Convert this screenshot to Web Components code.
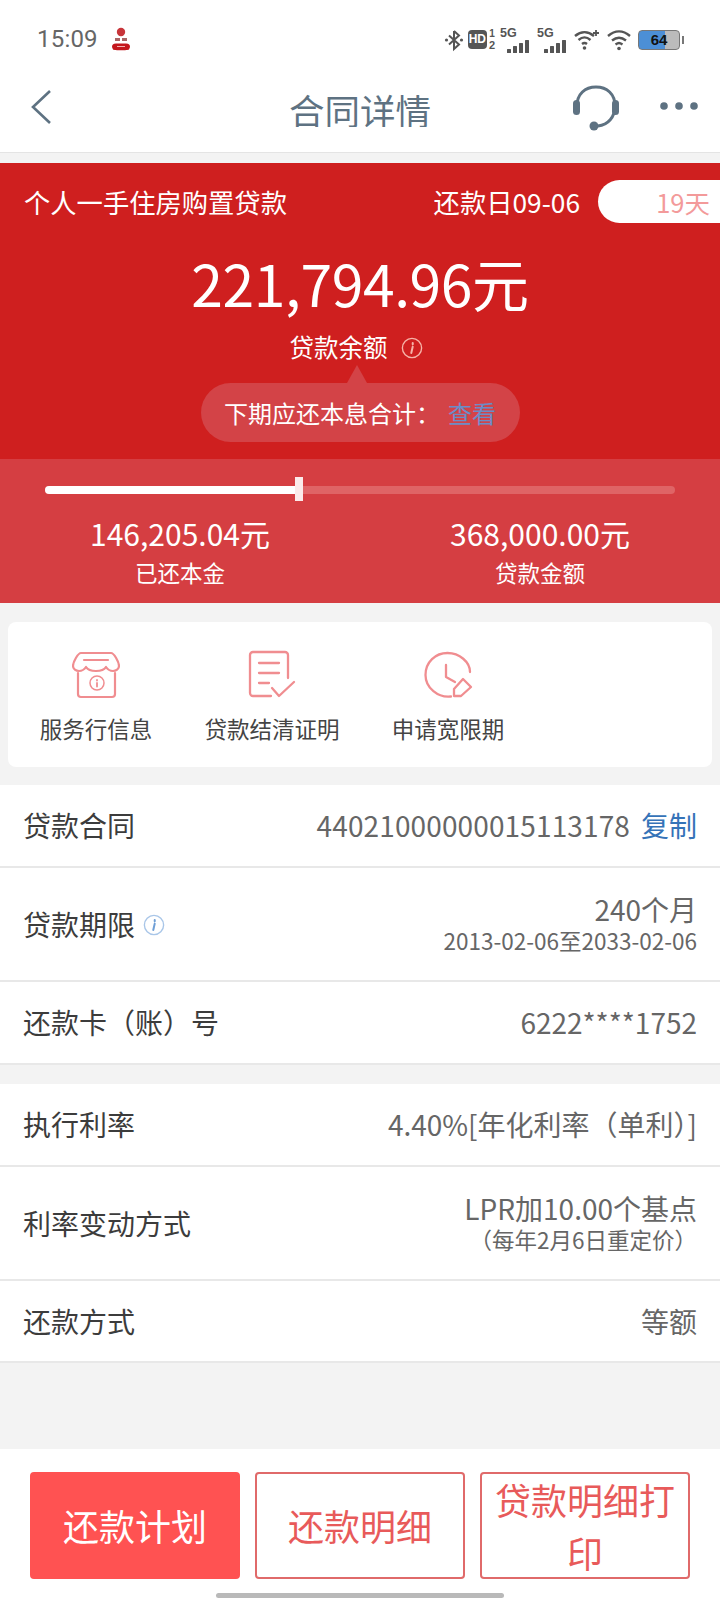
<!DOCTYPE html>
<html lang="zh-CN"><head><meta charset="utf-8"><title>合同详情</title>
<style>
html,body{margin:0;padding:0;background:#f3f3f3}
body{width:720px;height:1600px;overflow:hidden;font-family:"Noto Sans CJK SC","Noto Sans",sans-serif;color:#333}
</style></head><body>
<contract-page></contract-page>
<script>
const def=(name,html)=>{customElements.define(name,class extends HTMLElement{
  constructor(){super();this.attachShadow({mode:'open'}).innerHTML=html;}
})};
const info=(c,s,d)=>`<svg width="${s}" height="${s}" viewBox="0 0 24 24" fill="none" stroke="${c}" stroke-width="1.5"><circle cx="12" cy="12" r="10.5"/><path stroke="${d||c}" d="M12.800 6.600v1.200M12.800 10.500l-1.600 7" stroke-width="2.200" stroke-linecap="round"/></svg>`;

def('sig-bars',`<style>:host{display:inline-block;width:31px;height:26px;position:relative;font:600 12.500px/13px "Liberation Sans",sans-serif;color:#555}
.b{position:absolute;left:7px;bottom:0;display:flex;gap:2px;align-items:flex-end}.b i{width:4px;background:#555;display:block;border-radius:.5px}</style>
<span>5G</span><div class="b"><i style="height:4px"></i><i style="height:7px"></i><i style="height:10px"></i><i style="height:13px"></i></div>`);

def('status-bar',`<style>:host{display:flex;height:70px;box-sizing:border-box;padding:0 36px 0 37px;align-items:center;background:#fff;color:#666}
.t{font:24px/1 "Roboto",sans-serif;color:#666;letter-spacing:.2px;margin-top:7px}
.l{margin:8px 0 0 12px;display:block}
.r{margin-left:auto;display:flex;align-items:center;margin-top:9px}
.hd{font:800 12px/19px "Liberation Sans",sans-serif;background:#555;color:#fff;border-radius:4px;width:19px;height:19px;text-align:center;margin-left:4px}
.n{font:600 10px/10px "Liberation Sans",sans-serif;color:#555;margin:0 5px 0 2px;display:flex;flex-direction:column;align-items:center}
.bat{position:relative;width:42px;height:20px;box-sizing:border-box;border:1.500px solid #777;border-radius:4px;margin-left:6px;background:linear-gradient(90deg,#4c8fd6 0 66%,#bbb 66%);font:700 15px/17px "Liberation Sans",sans-serif;color:#111;text-align:center}
.cap{width:2px;height:8px;background:#777;margin-left:2px}
svg{display:block}
</style>
<span class="t">15:09</span>
<svg class="l" width="22" height="24" viewBox="0 0 22 24"><circle cx="11" cy="5" r="4.200" fill="#c8353a"/><path d="M5 11h5v3H5zM12 11h5v3h-5z" fill="#a66"/><path d="M2 20c0-2 1-3.500 4-3.500h10c3 0 4 1.500 4 3.500l-1 2.500c-1 1-15 1-16 0z" fill="#c4161c"/><path d="M7 19.500h8" stroke="#f3b0b0" stroke-width="1"/></svg>
<div class="r">
<svg width="20" height="24" viewBox="0 0 20 24" fill="none" stroke="#555" stroke-width="2"><path d="M10 3v18l5-4.500L5 7.500M10 3l5 4.500-10 9"/><circle cx="2.500" cy="12" r="1.600" fill="#555" stroke="none"/><circle cx="17.500" cy="12" r="1.600" fill="#555" stroke="none"/></svg>
<span class="hd">HD</span><span class="n"><span>1</span><span style="font-size:11px;margin-top:1px">2</span></span>
<sig-bars></sig-bars><span style="width:6px"></span><sig-bars></sig-bars>
<svg style="margin-left:6px" width="26" height="22" viewBox="0 0 26 22" fill="none" stroke="#555" stroke-width="2.400"><path d="M1 7c6-5 13-5 19 0M4.500 11c4-3.500 8-3.500 12 0M8 15c2-1.500 3-1.500 5 0"/><circle cx="10.500" cy="19" r="1.800" fill="#555" stroke="none"/><path d="M22 1v6M19 4h6" stroke-width="1.800"/></svg>
<svg style="margin-left:6px" width="26" height="22" viewBox="0 0 26 22" fill="none" stroke="#555" stroke-width="2.400"><path d="M2 7c7-6 15-6 22 0M6 11.500c5-4 9-4 14 0M9.500 15.500c3-2 4-2 7 0"/><circle cx="13" cy="19.500" r="1.800" fill="#555" stroke="none"/></svg>
<span class="bat">64</span><span class="cap"></span>
</div>`);

def('nav-bar',`<style>:host{display:flex;height:83px;background:#fff;align-items:flex-start;position:relative;border-bottom:1px solid #e4e4e4;box-sizing:border-box}
.back{margin:19px 0 0 30px}
.title{position:absolute;left:0;right:0;top:15px;height:42px;overflow:hidden;text-align:center;font-size:35.500px;line-height:50px;color:#5e7282}
.hs{margin:15px 0 0 auto}
.more{margin:31px 22px 0 41px}
</style>
<svg class="back" width="22" height="36" viewBox="0 0 22 36" fill="none" stroke="#5e7282" stroke-width="2.600"><path d="M20 2 3 18l17 16"/></svg>
<div class="title"><slot></slot></div>
<svg class="hs" width="46" height="46" viewBox="0 0 46 46" fill="none" stroke="#5e7282" stroke-width="3"><path d="M4 21C4 9 12 2 23 2s19 7 19 19c0 11-7 19-17 20"/><rect x="0" y="15" width="7" height="15" rx="3.500" fill="#5e7282" stroke="none"/><rect x="39" y="15" width="7" height="15" rx="3.500" fill="#5e7282" stroke="none"/><circle cx="21" cy="41" r="4.500" fill="#5e7282" stroke="none"/></svg>
<svg class="more" width="38" height="10" viewBox="0 0 38 10" fill="#5e7282"><circle cx="4" cy="5" r="3.800"/><circle cx="19" cy="5" r="3.800"/><circle cx="34" cy="5" r="3.800"/></svg>`);

def('loan-hero',`<style>:host{display:block;margin-top:10px;height:296px;background:#cf1f1f;color:#fff;box-sizing:border-box;padding-top:17px}
.top{display:flex;align-items:center;height:43px;padding-left:24px}
.name{font-size:26.300px;line-height:43px}
.due{margin-left:auto;font-size:26.300px;line-height:43px;margin-right:18px}
.pill{width:122px;height:43px;background:#fff;border-radius:22px 0 0 22px;color:#f39a9a;font-size:25.500px;line-height:43px;text-align:right;padding-right:10px;box-sizing:border-box}
.amt{text-align:center;font-size:57px;line-height:80px;margin-top:19px;letter-spacing:-.4px}
.sub{display:flex;justify-content:center;align-items:center;gap:13px;font-size:24.500px;line-height:36px;margin-top:7px;padding-right:8px}
.sub svg{display:block;margin-top:2px}
.tipw{display:flex;justify-content:center;margin-top:18px}
.tip{position:relative;width:319px;height:59px;border-radius:30px;background:#d34347;font-size:24px;line-height:59px;text-align:center;white-space:pre}
.tip:before{content:"";position:absolute;left:146px;top:-18px;border:10px solid transparent;border-top:0;border-bottom:18px solid #d34347}
b{font-weight:400;color:#6b8dc7;margin-left:8px}
</style>
<div class="top"><span class="name">个人一手住房购置贷款</span><span class="due">还款日09-06</span><span class="pill">19天</span></div>
<div class="amt">221,794.96元</div>
<div class="sub"><span>贷款余额</span>${info('#f6b3a8',22)}</div>
<div class="tipw"><div class="tip">下期应还本息合计：<b>查看</b></div></div>`);

def('loan-progress',`<style>:host{display:block;height:144px;background:#d53e42;color:#fff;box-sizing:border-box;padding-top:27px}
.track{position:relative;height:8px;margin:0 45px;border-radius:4px;background:#df6466}
.fill{height:8px;width:254px;background:#fff;border-radius:4px 0 0 4px}
.h{position:absolute;left:250px;top:-9px;width:8px;height:24px;background:#fbeaea}
.cols{display:grid;grid-template-columns:1fr 1fr;margin-top:19px;text-align:center}
.v{font-size:30px;line-height:40px}
.k{font-size:22.500px;line-height:34px;margin-top:2px}
</style>
<div class="track"><div class="fill"></div><div class="h"></div></div>
<div class="cols"><div class="c"><div class="v">146,205.04元</div><div class="k">已还本金</div></div><div class="c"><div class="v">368,000.00元</div><div class="k">贷款金额</div></div></div>`);

def('quick-action',`<style>:host{display:flex;flex-direction:column;align-items:center;width:176px;color:#444;font-size:22.500px}
.i{height:50px;display:flex;align-items:center;justify-content:center}
.t{line-height:34px;margin-top:11px;white-space:nowrap}
</style><div class="i"><slot name="icon"></slot></div><div class="t"><slot></slot></div>`);

def('quick-actions',`<style>:host{display:flex;margin:19px 8px 0;height:145px;border-radius:8px;background:#fff;box-sizing:border-box;padding:28px 0 0 0}
quick-action:first-child{margin-left:-1.500px}
svg{display:block}
</style>
<quick-action><svg slot="icon" width="48" height="48" viewBox="0 0 48 48" fill="none" stroke="#f08d90" stroke-width="2.200" stroke-linejoin="round" stroke-linecap="round"><path d="M6 22v21a3 3 0 0 0 3 3h31a3 3 0 0 0 3-3V22"/><path d="M9 2h30c3 0 8 9 8 13 0 3-3 5-6 5-3.500 0-6-2.500-7-4-1.500 2.500-5 4-10 4s-8.500-1.500-10-4c-1 1.500-3.500 4-7 4-3 0-6-2-6-5C1 11 6 2 9 2z"/><path d="M12 9h24"/><circle cx="25" cy="32" r="7" stroke-width="1.500"/><path d="M25 29v.5M25 32v3.500" stroke-width="1.800"/></svg>服务行信息</quick-action>
<quick-action><svg slot="icon" width="48" height="50" viewBox="0 0 48 50" fill="none" stroke="#f08d90" stroke-width="2.300" stroke-linecap="round" stroke-linejoin="round"><path d="M23 46H5a3 3 0 0 1-3-3V5a3 3 0 0 1 3-3h32a3 3 0 0 1 3 3v23"/><path d="M11 13h20M11 23h20M11 33h10M24 38l7 8 15-14"/></svg>贷款结清证明</quick-action>
<quick-action><svg slot="icon" width="50" height="48" viewBox="0 0 50 48" fill="none" stroke="#f08d90" stroke-width="2.300" stroke-linecap="round" stroke-linejoin="round"><path d="M28 45.500C15 47 2.500 37 2.500 24S12.500 2 24.500 2 47 11 47 21"/><path d="M23 14v12l9 5"/><path d="M40 28l8 8-10 9h-7v-7z"/></svg>申请宽限期</quick-action>`);

def('detail-row',`<style>:host{display:flex;align-items:center;background:#fff;padding:0 23px 1px;border-bottom:2px solid #e8e8e8;box-sizing:border-box;height:var(--h,84px)}
.l{display:flex;align-items:center;gap:8px;font-size:28px;color:#3c3c3c;white-space:nowrap}
.r{margin-left:auto;text-align:right;font-size:28px;color:#666;line-height:36px;white-space:nowrap}
</style><div class="l"><slot name="label"></slot></div><div class="r"><slot></slot></div>`);

def('info-dot',`<style>:host{display:inline-block;width:22px;height:22px;margin-top:2px}svg{display:block}</style>${info('#a9c6e8',22,'#6f9fd6')}`);
def('sub-line',`<style>:host{display:block;font-size:22.500px;line-height:26px;color:#666;padding-bottom:3px}</style><slot></slot>`);
def('copy-link',`<style>:host{color:#3573b8;margin-left:11px;font-size:28px}</style><slot></slot>`);

def('action-button',`<style>:host{display:flex;align-items:center;justify-content:center;width:210px;height:107px;box-sizing:border-box;border:2px solid #e06a6a;border-radius:4px;color:#e85a5a;font-size:36px;line-height:53px;text-align:center;background:#fff;padding:0 12px}
:host([primary]){background:#ff5252;border-color:#ff5252;color:#fff}</style><slot></slot>`);

def('action-bar',`<style>:host{display:flex;position:relative;height:151px;box-sizing:border-box;background:#fff;padding:23px 30px 0;gap:15px;align-items:flex-start}
.home{position:absolute;left:216px;top:144px;width:288px;height:5px;border-radius:3px;background:#b9b9b9}
</style><slot></slot><div class="home"></div>`);

def('contract-page',`<style>:host{display:flex;flex-direction:column;width:720px;height:1600px;background:#f3f3f3}
.g{margin-top:18px;display:block}.g2{margin-top:19px;display:block}
.sp{flex:1}
.num{letter-spacing:.13px}
</style>
<status-bar></status-bar><nav-bar>合同详情</nav-bar><loan-hero></loan-hero><loan-progress></loan-progress><quick-actions></quick-actions>
<div class="g">
<detail-row style="--h:83px"><span slot="label">贷款合同</span><span class="num">44021000000015113178</span><copy-link>复制</copy-link></detail-row>
<detail-row style="--h:114px"><span slot="label">贷款期限</span><info-dot slot="label"></info-dot>240个月<sub-line>2013-02-06至2033-02-06</sub-line></detail-row>
<detail-row style="--h:83px"><span slot="label">还款卡（账）号</span>6222****1752</detail-row>
</div>
<div class="g2">
<detail-row style="--h:83px"><span slot="label">执行利率</span>4.40%[年化利率（单利）]</detail-row>
<detail-row style="--h:114px"><span slot="label">利率变动方式</span>LPR加10.00个基点<sub-line>（每年2月6日重定价）</sub-line></detail-row>
<detail-row style="--h:82px"><span slot="label">还款方式</span>等额</detail-row>
</div>
<div class="sp"></div>
<action-bar><action-button primary>还款计划</action-button><action-button>还款明细</action-button><action-button>贷款明细打印</action-button></action-bar>`);
</script>
</body></html>
